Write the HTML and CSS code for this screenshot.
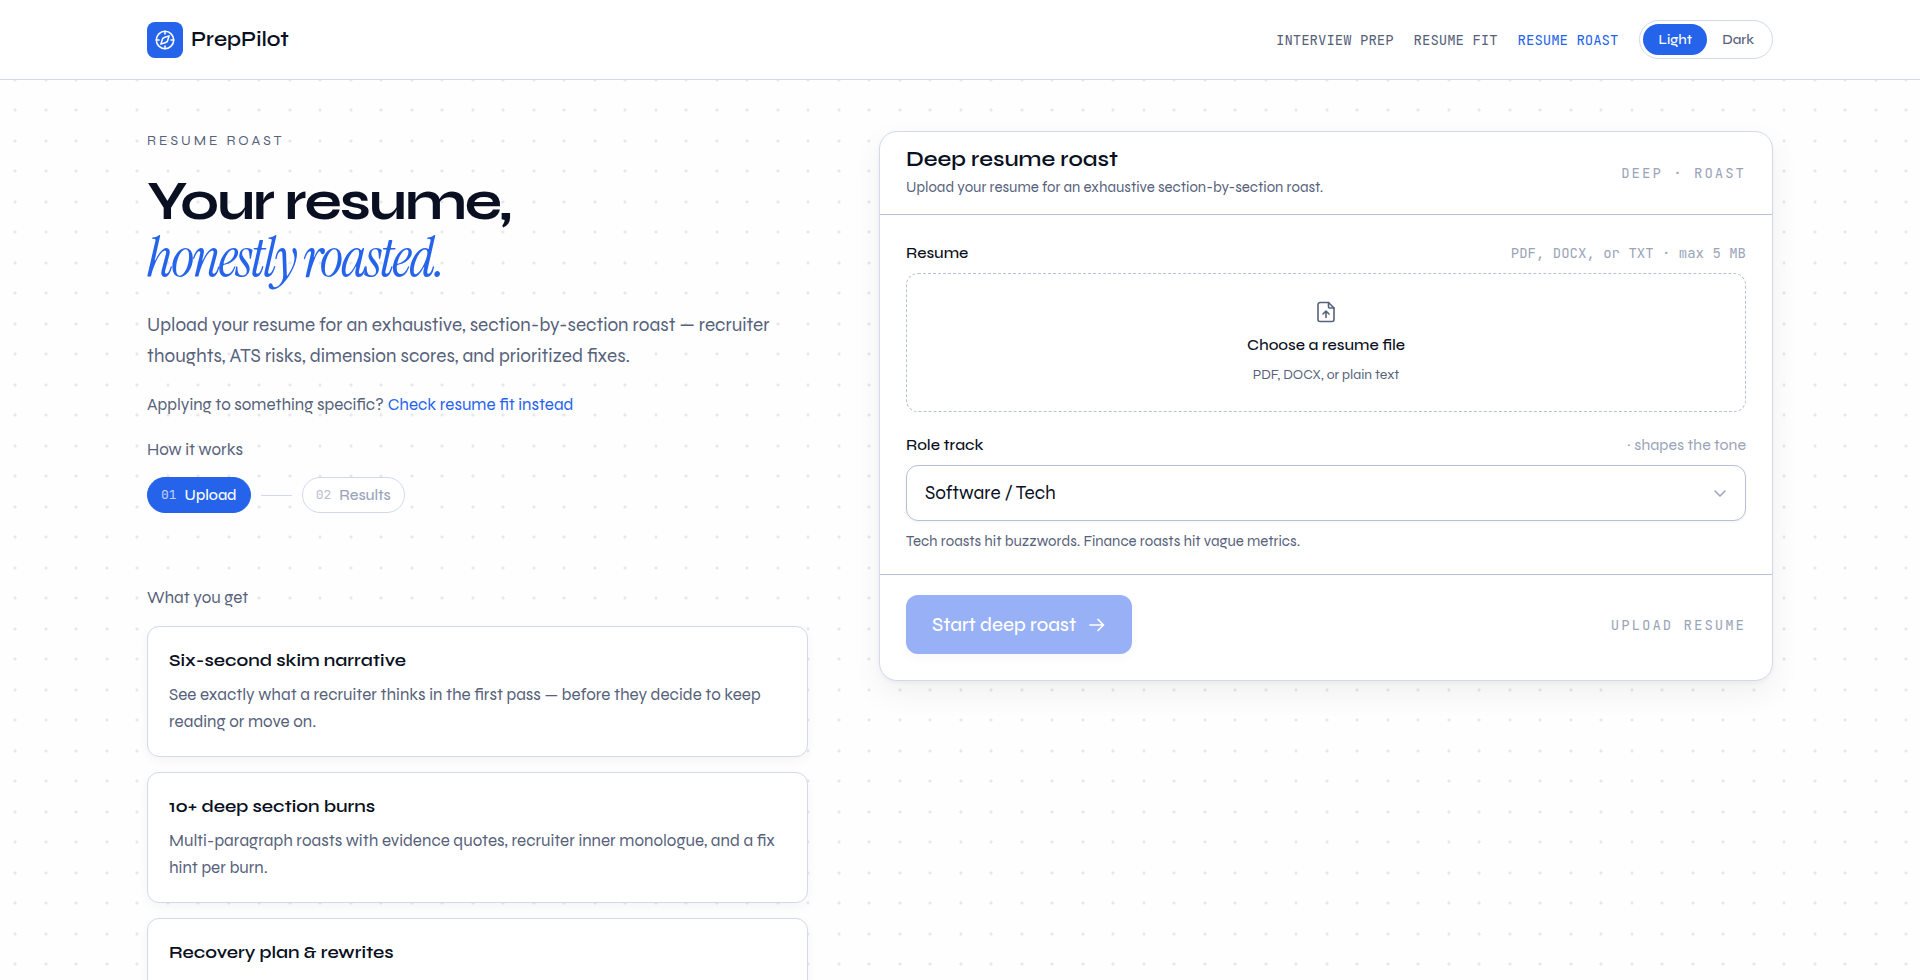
FILE: index.html
```html
<!DOCTYPE html>
<html lang="en">
<head>
<meta charset="utf-8">
<meta name="viewport" content="width=device-width, initial-scale=1">
<title>PrepPilot – Resume Roast</title>
<link rel="stylesheet" href="styles.css">
</head>
<body>
<header class="site-header">
  <div class="container header-row">
    <a class="brand" href="#">
      <span class="brand-mark">
        <svg viewBox="0 0 24 24" width="22" height="22" fill="none" stroke="currentColor" stroke-width="1.700" stroke-linecap="round" stroke-linejoin="round" aria-hidden="true"><circle cx="12" cy="12" r="9.500"/><path d="M12 2.500v3M12 18.500v3M2.500 12h3M18.500 12h3"/><path d="M16.500 7.500l-1.700 5.300a3 3 0 0 1-2 2L7.500 16.500l1.700-5.300a3 3 0 0 1 2-2z"/></svg>
      </span>
      <span class="brand-name">PrepPilot</span>
    </a>
    <div class="header-end">
      <nav class="nav" aria-label="Main">
        <a href="#">INTERVIEW PREP</a>
        <a href="#">RESUME FIT</a>
        <a class="active" href="#" aria-current="page">RESUME ROAST</a>
      </nav>
      <div class="theme-toggle" role="group" aria-label="Theme">
        <button class="theme-option selected" type="button" aria-pressed="true">Light</button>
        <button class="theme-option" type="button" aria-pressed="false">Dark</button>
      </div>
    </div>
  </div>
</header>

<main class="container page-grid">
  <section class="intro">
    <p class="eyebrow">RESUME ROAST</p>
    <h1 class="headline">Your resume,<em>honestly roasted.</em></h1>
    <p class="lead">Upload your resume for an exhaustive, section-by-section roast — recruiter thoughts, ATS risks, dimension scores, and prioritized fixes.</p>
    <p class="alt">Applying to something specific? <a href="#">Check resume fit instead</a></p>
    <h2 class="section-label">How it works</h2>
    <ol class="steps">
      <li class="step current"><span class="step-number">01</span>Upload</li>
      <li class="step-line" aria-hidden="true"></li>
      <li class="step"><span class="step-number">02</span>Results</li>
    </ol>
    <h2 class="section-label benefits-label">What you get</h2>
    <div class="benefits">
      <article class="benefit">
        <h3>Six-second skim narrative</h3>
        <p>See exactly what a recruiter thinks in the first pass — before they decide to keep reading or move on.</p>
      </article>
      <article class="benefit">
        <h3>10+ deep section burns</h3>
        <p>Multi-paragraph roasts with evidence quotes, recruiter inner monologue, and a fix hint per burn.</p>
      </article>
      <article class="benefit">
        <h3>Recovery plan &amp; rewrites</h3>
      </article>
    </div>
  </section>

  <form class="panel">
    <div class="panel-head">
      <div>
        <h2 class="panel-title">Deep resume roast</h2>
        <p class="panel-subtitle">Upload your resume for an exhaustive section-by-section roast.</p>
      </div>
      <span class="tag">DEEP · ROAST</span>
    </div>
    <div class="panel-body">
      <div class="field">
        <div class="field-head">
          <label for="resume-file">Resume</label>
          <span class="hint mono">PDF, DOCX, or TXT · max 5 MB</span>
        </div>
        <button class="dropzone" id="resume-file" type="button">
          <svg class="file-icon" viewBox="0 0 24 24" width="24" height="24" fill="none" stroke="currentColor" stroke-width="1.600" stroke-linecap="round" stroke-linejoin="round" aria-hidden="true"><path d="M14.500 2.500H6a2 2 0 0 0-2 2v15a2 2 0 0 0 2 2h12a2 2 0 0 0 2-2V8z"/><path d="M14.500 2.500V7a1 1 0 0 0 1 1H20"/><path d="M12 17.500v-6.500M9 14l3-3 3 3"/></svg>
          <span class="dropzone-title">Choose a resume file</span>
          <span class="dropzone-note">PDF, DOCX, or plain text</span>
        </button>
      </div>
      <div class="field">
        <div class="field-head">
          <label for="role-track">Role track</label>
          <span class="hint">· shapes the tone</span>
        </div>
        <div class="select-wrap">
          <select id="role-track" aria-describedby="role-help">
            <option>Software / Tech</option>
            <option>Finance</option>
          </select>
          <svg class="chevron" viewBox="0 0 16 16" width="16" height="16" fill="none" stroke="currentColor" stroke-width="1.500" stroke-linecap="round" stroke-linejoin="round" aria-hidden="true"><path d="M3 6l5 5 5-5"/></svg>
        </div>
        <p class="help" id="role-help">Tech roasts hit buzzwords. Finance roasts hit vague metrics.</p>
      </div>
    </div>
    <div class="panel-foot">
      <button class="submit" type="submit" disabled>Start deep roast
        <svg viewBox="0 0 18 18" width="18" height="18" fill="none" stroke="currentColor" stroke-width="1.700" stroke-linecap="round" stroke-linejoin="round" aria-hidden="true"><path d="M2 9h13M10 3.500L15.500 9 10 14.500"/></svg>
      </button>
      <span class="tag">UPLOAD RESUME</span>
    </div>
  </form>
</main>
</body>
</html>
```
FILE: styles.css
```css
:root {
  --ink: #0a1022;
  --muted: #56617a;
  --faint: #9aa4b8;
  --blue: #2563eb;
  --line: #d1d9eb;
  --line-strong: #b6c0d7;
  --dot: #e6e8ee;
  --sans: Syne, Lato, sans-serif;
  --serif: "Instrument Serif", "Liberation Serif", serif;
  --mono: "JetBrains Mono", "Liberation Mono", monospace;
}

* {
  box-sizing: border-box;
}

body {
  margin: 0;
  min-height: 100vh;
  color: var(--ink);
  font: 16px/24px var(--sans);
  background-color: #fefefe;
  background-image:
    radial-gradient(circle at 15px 19px, var(--dot) 1px, transparent 2px),
    radial-gradient(circle at 46px 19px, var(--dot) 1px, transparent 2px),
    radial-gradient(circle at 15px 49px, var(--dot) 1px, transparent 2px),
    radial-gradient(circle at 46px 49px, var(--dot) 1px, transparent 2px);
  background-size: 61px 61px;
}

h1, h2, h3, p, ol {
  margin: 0;
  padding: 0;
}

a {
  color: inherit;
  text-decoration: none;
}

button, select {
  font: inherit;
}

.container {
  max-width: 1674px;
  margin: 0 auto;
  padding: 0 24px;
}

.site-header {
  background: rgba(255, 255, 255, 0.95);
  border-bottom: 1px solid var(--line);
}

.header-row {
  display: flex;
  align-items: center;
  justify-content: space-between;
  height: 79px;
}

.brand {
  display: flex;
  align-items: center;
  gap: 8px;
}

.brand-mark {
  display: grid;
  place-items: center;
  width: 36px;
  height: 36px;
  border-radius: 8px;
  color: #fff;
  background: var(--blue);
}

.brand-name {
  font: 600 21px/28px var(--sans);
}

.header-end {
  display: flex;
  align-items: center;
  gap: 21px;
}

.nav {
  display: flex;
  gap: 20px;
  color: var(--muted);
  font: 14px/20px var(--mono);
}

.nav .active {
  color: var(--blue);
}

.theme-toggle {
  display: flex;
  padding: 3px;
  border: 1px solid var(--line);
  border-radius: 20px;
  background: #fff;
}

.theme-option {
  height: 31px;
  padding: 0 15px;
  border: 0;
  border-radius: 16px;
  color: var(--muted);
  background: none;
  font: 500 14px/20px var(--sans);
}

.theme-option.selected {
  color: #fff;
  background: var(--blue);
}

.page-grid {
  display: grid;
  grid-template-columns: minmax(0, 661fr) minmax(0, 894fr);
  gap: 71px;
  align-items: start;
  padding-top: 51px;
}

.eyebrow {
  color: var(--muted);
  font: 14px/20px var(--sans);
  letter-spacing: 3px;
}

.headline {
  margin-top: 21px;
  font: 700 55px/58px var(--sans);
  letter-spacing: -2px;
}

.headline em {
  display: block;
  color: var(--blue);
  font-family: var(--serif);
  font-weight: 400;
}

.lead {
  margin-top: 21px;
  color: var(--muted);
  font-size: 19px;
  line-height: 31px;
}

.alt {
  margin-top: 22px;
  color: var(--muted);
  font-size: 17px;
}

.alt a {
  color: var(--blue);
}

.section-label {
  margin-top: 21px;
  color: var(--muted);
  font: 400 17px/24px var(--sans);
}

.steps {
  display: flex;
  align-items: center;
  gap: 10px;
  margin-top: 15px;
  list-style: none;
}

.step {
  display: flex;
  align-items: center;
  gap: 8px;
  height: 36px;
  padding: 0 13px;
  border: 1px solid var(--line);
  border-radius: 18px;
  color: var(--faint);
  background: #fff;
  font: 500 15px/20px var(--sans);
}

.step.current {
  border-color: var(--blue);
  color: #fff;
  background: var(--blue);
}

.step-number {
  font: 13px/20px var(--mono);
  opacity: 0.7;
}

.step-line {
  width: 31px;
  height: 1px;
  background: var(--line);
}

.benefits-label {
  margin-top: 73px;
}

.benefits {
  display: grid;
  gap: 15px;
  margin-top: 16px;
}

.benefit {
  min-height: 131px;
  padding: 21px;
  border: 1px solid var(--line);
  border-radius: 12px;
  background: #fff;
  box-shadow: 0 4px 12px rgba(15, 23, 42, 0.04);
}

.benefit h3 {
  font: 600 18px/24px var(--sans);
}

.benefit p {
  margin-top: 9px;
  color: var(--muted);
  font-size: 17px;
  line-height: 27px;
}

.panel {
  border: 1px solid var(--line);
  border-radius: 18px;
  background: #fff;
  box-shadow: 0 2px 4px rgba(15, 23, 42, 0.04), 0 12px 32px rgba(15, 23, 42, 0.06);
}

.panel-head,
.panel-foot {
  display: flex;
  align-items: center;
  justify-content: space-between;
}

.panel-head {
  height: 83px;
  padding: 0 26px;
  border-bottom: 1px solid var(--line-strong);
}

.panel-title {
  font: 600 22px/28px var(--sans);
}

.panel-subtitle,
.help {
  color: var(--muted);
  font-size: 15px;
  line-height: 24px;
}

.panel-subtitle {
  line-height: 28px;
}

.tag {
  color: var(--faint);
  font: 14px/20px var(--mono);
  letter-spacing: 2px;
}

.panel-body {
  display: grid;
  gap: 21px;
  padding: 26px 26px 21px;
}

.field-head {
  display: flex;
  align-items: center;
  justify-content: space-between;
  margin-bottom: 8px;
}

.field-head label {
  font: 500 16px/24px var(--sans);
}

.hint {
  color: var(--faint);
}

.hint.mono {
  font: 14px/20px var(--mono);
}

.dropzone {
  display: flex;
  flex-direction: column;
  align-items: center;
  width: 100%;
  padding: 26px 20px;
  border: 1px dashed var(--line-strong);
  border-radius: 12px;
  color: var(--ink);
  background: #fff;
}

.file-icon {
  color: var(--muted);
}

.dropzone-title {
  margin-top: 9px;
  font: 500 16px/24px var(--sans);
}

.dropzone-note {
  margin-top: 8px;
  color: var(--muted);
  font-size: 14px;
  line-height: 20px;
}

.select-wrap {
  position: relative;
}

.select-wrap select {
  appearance: none;
  width: 100%;
  height: 56px;
  padding: 0 48px 0 18px;
  border: 1px solid var(--line-strong);
  border-radius: 12px;
  color: var(--ink);
  background: #fff;
  font: 19px/24px var(--sans);
  box-shadow: 0 1px 3px rgba(15, 23, 42, 0.05);
}

.chevron {
  position: absolute;
  top: 20px;
  right: 18px;
  color: var(--faint);
  pointer-events: none;
}

.help {
  margin-top: 8px;
}

.panel-foot {
  padding: 20px 26px 26px;
  border-top: 1px solid var(--line-strong);
}

.submit {
  display: flex;
  align-items: center;
  gap: 12px;
  height: 59px;
  padding: 0 26px;
  border: 0;
  border-radius: 12px;
  color: #fff;
  background: #97b0f6;
  font: 500 19px/24px var(--sans);
  box-shadow: 0 4px 12px rgba(15, 23, 42, 0.03);
}
```
